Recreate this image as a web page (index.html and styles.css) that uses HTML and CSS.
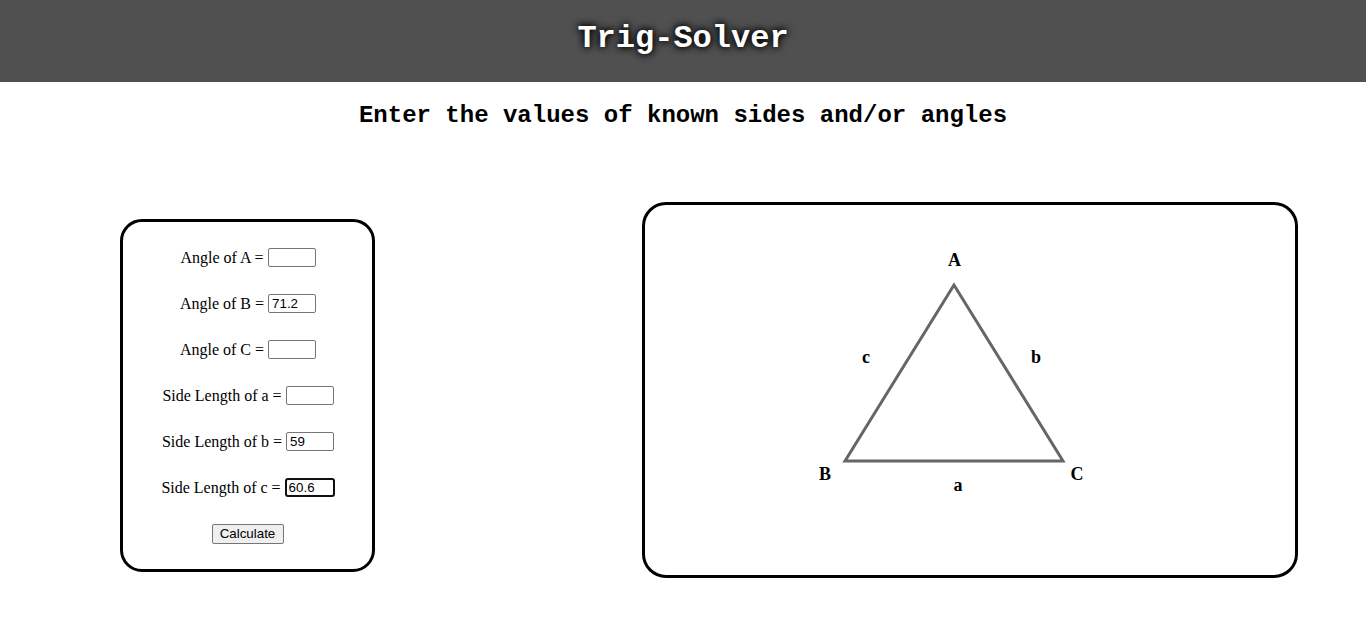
FILE: index.html
```html
<!DOCTYPE html>
<html>
<head>
<meta charset="utf-8">
<title>Trig-Solver</title>
<link rel="stylesheet" href="styles.css">
</head>
<body>
<header class="top-bar">
  <h1 class="title">Trig-Solver</h1>
</header>
<h2 class="subtitle">Enter the values of known sides and/or angles</h2>
<main class="content">
  <form class="solver-form">
    <label class="row">Angle of A = <input class="field" type="text" value=""></label>
    <label class="row">Angle of B = <input class="field" type="text" value="71.2"></label>
    <label class="row">Angle of C = <input class="field" type="text" value=""></label>
    <label class="row">Side Length of a = <input class="field" type="text" value=""></label>
    <label class="row">Side Length of b = <input class="field" type="text" value="59"></label>
    <label class="row">Side Length of c = <input class="field field-active" type="text" value="60.6"></label>
    <div class="row row-btn"><button class="calc-btn" type="button">Calculate</button></div>
  </form>
  <section class="diagram">
    <svg class="triangle" width="650" height="370" viewBox="0 0 650 370">
      <polygon points="309,80 200,256 418,256" fill="none" stroke="#666" stroke-width="3" stroke-linejoin="miter"/>
      <g class="tri-label">
        <text x="309.5" y="61" text-anchor="middle">A</text>
        <text x="221" y="158" text-anchor="middle">c</text>
        <text x="391" y="158" text-anchor="middle">b</text>
        <text x="180" y="275" text-anchor="middle">B</text>
        <text x="432" y="275" text-anchor="middle">C</text>
        <text x="313" y="286" text-anchor="middle">a</text>
      </g>
    </svg>
  </section>
</main>
</body>
</html>
```

FILE: styles.css
```css
html, body {
  margin: 0;
  padding: 0;
  background: #fff;
}

body {
  font-family: "Liberation Serif", "Times New Roman", serif;
  color: #000;
}

.top-bar {
  height: 82px;
  background: #505050;
  display: flex;
  align-items: center;
  justify-content: center;
}

.title {
  margin: 0 0 4px 0;
  font-family: "Liberation Mono", "Courier New", monospace;
  font-size: 32px;
  font-weight: bold;
  color: #fff;
  text-shadow: 0 0 6px #000, 0 0 10px #000;
  line-height: 1;
}

.subtitle {
  margin: 20px 0 0 0;
  text-align: center;
  font-family: "Liberation Mono", "Courier New", monospace;
  font-size: 24px;
  font-weight: bold;
  line-height: 28px;
}

.content {
  display: flex;
  align-items: flex-start;
  padding-left: 120px;
  gap: 267px;
  margin-top: 72px;
}

.solver-form {
  width: 249px;
  height: 347px;
  box-sizing: content-box;
  border: 3px solid #000;
  border-radius: 22px;
  margin-top: 17px;
  display: flex;
  flex-direction: column;
  align-items: center;
}

.row {
  display: flex;
  align-items: center;
  justify-content: center;
  font-size: 16px;
  height: 21px;
  margin-top: 25px;
  padding-left: 1px;
  white-space: pre;
}

.row-btn {
  padding-left: 0;
}

.field {
  width: 40px;
  height: 15px;
  padding: 1px 3px;
  border: 1px solid #767676;
  border-radius: 2px;
  font-family: "Liberation Sans", Arial, sans-serif;
  font-size: 13.33px;
  color: #000;
  background: #fff;
  margin: 0;
}

.field-active {
  border: 2px solid #101010;
  padding: 0 2px;
  width: 42px;
  height: 15px;
  border-radius: 3px;
}

.calc-btn {
  font-family: "Liberation Sans", Arial, sans-serif;
  font-size: 13.33px;
  padding: 1px 6px;
  width: 72px;
  height: 20px;
  background: #efefef;
  border: 1px solid #767676;
  border-radius: 2px;
  color: #000;
  margin: 0;
}

.diagram {
  width: 650px;
  height: 370px;
  border: 3px solid #000;
  border-radius: 24px;
}

.triangle {
  display: block;
}

.tri-label text {
  font-family: "Liberation Serif", "Times New Roman", serif;
  font-weight: bold;
  font-size: 18px;
  fill: #000;
}
```
